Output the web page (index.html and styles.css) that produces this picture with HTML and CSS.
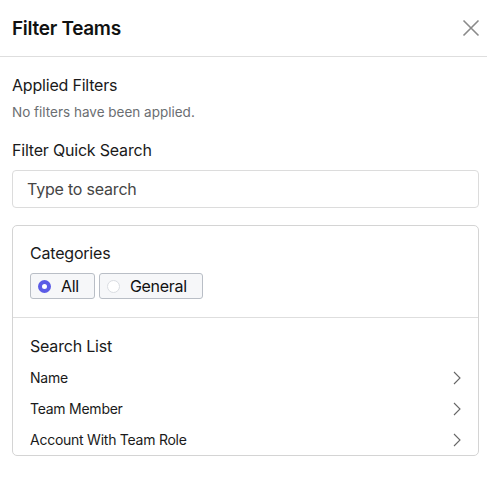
FILE: index.html
```html
<!DOCTYPE html>
<html>
<head>
<meta charset="utf-8">
<link rel="stylesheet" href="styles.css">
</head>
<body>
<div class="panel">
  <div class="header">
    <h1 class="title">Filter Teams</h1>
    <button class="close" aria-label="Close">
      <svg width="18" height="18" viewBox="0 0 18 18"><path d="M1.5 1.5 L16.5 16.5 M16.5 1.5 L1.5 16.5" stroke="#8a8a8a" stroke-width="1.6" fill="none"/></svg>
    </button>
  </div>
  <div class="body">
    <div class="section first">
      <div class="label">Applied Filters</div>
      <div class="hint">No filters have been applied.</div>
    </div>
    <div class="section">
      <div class="label">Filter Quick Search</div>
      <div class="input">Type to search</div>
    </div>
    <div class="card">
      <div class="card-top">
        <div class="label">Categories</div>
        <div class="radios">
          <div class="radio checked"><span class="dot"></span>All</div>
          <div class="radio"><span class="dot"></span>General</div>
        </div>
      </div>
      <div class="card-bottom">
        <div class="label">Search List</div>
        <div class="list">
          <div class="item"><span>Name</span><svg class="chev" width="8" height="14" viewBox="0 0 8 14"><path d="M1 1 L7 7 L1 13" stroke="#666" stroke-width="1.1" fill="none"/></svg></div>
          <div class="item"><span>Team Member</span><svg class="chev" width="8" height="14" viewBox="0 0 8 14"><path d="M1 1 L7 7 L1 13" stroke="#666" stroke-width="1.1" fill="none"/></svg></div>
          <div class="item"><span>Account With Team Role</span><svg class="chev" width="8" height="14" viewBox="0 0 8 14"><path d="M1 1 L7 7 L1 13" stroke="#666" stroke-width="1.1" fill="none"/></svg></div>
        </div>
      </div>
    </div>
  </div>
</div>
</body>
</html>
```
FILE: styles.css
```css
* { box-sizing: border-box; }
html, body { margin: 0; padding: 0; background: #fff; }
body { font-family: Inter, "Noto Sans", sans-serif; color: #181818; }
.panel { width: 487px; }
.header {
  height: 57px;
  border-bottom: 1px solid #dedede;
  display: flex;
  align-items: center;
  justify-content: space-between;
  padding: 0 4px 0 12px;
}
.title { margin: 0; font-size: 19px; font-weight: 600; letter-spacing: -0.3px; color: #111; }
.close { border: 0; background: none; padding: 0; width: 24px; height: 24px; display: flex; align-items: center; justify-content: center; }
.body { padding: 18px 8px 0 12px; }
.label { font-size: 16px; line-height: 20px; color: #1a1a1a; letter-spacing: -0.2px; }
.hint { margin-top: 8px; font-size: 13.5px; line-height: 18px; color: #6b6e72; }
.section { margin-bottom: 17px; }
.section.first { margin-bottom: 19px; }
.input {
  margin-top: 10px;
  height: 38px;
  border: 1px solid #dcdcdc;
  border-radius: 4px;
  padding: 0 14px;
  display: flex; align-items: center;
  font-size: 16px; color: #454545; letter-spacing: -0.2px;
}
.card { border: 1px solid #d4d4d4; border-radius: 5px; }
.card-top { padding: 17px 17px 18px; border-bottom: 1px solid #dedede; }
.radios { display: flex; gap: 4px; margin-top: 10px; }
.radio {
  height: 26px;
  border: 1px solid #b9bec6;
  border-radius: 3px;
  background: #f6f7f9;
  display: flex; align-items: center;
  padding: 0 15px 0 7px;
  font-size: 16px; color: #111;
  letter-spacing: -0.3px;
}
.dot {
  width: 13px; height: 13px; border-radius: 50%;
  border: 1px solid #dadde2; background: #fff;
  margin-right: 10px;
}
.checked .dot { border: 4px solid #5b5be6; background: #fff; }
.card-bottom { padding: 18px 17px 0; }
.list { margin-top: 6px; }
.item {
  height: 31px;
  display: flex; align-items: center; justify-content: space-between;
  font-size: 14px; color: #1a1a1a;
  letter-spacing: -0.25px;
}
```
